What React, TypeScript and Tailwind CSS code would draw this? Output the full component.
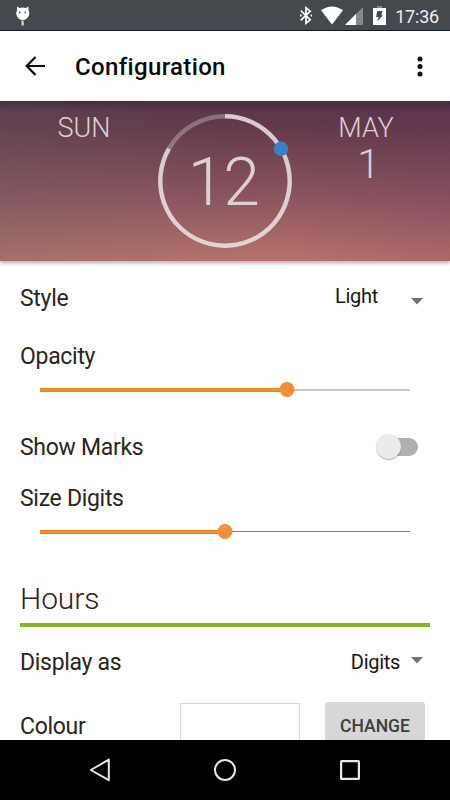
import { useState } from "react";

const StatusBar = () => (
  <div className="flex h-[31px] shrink-0 items-start justify-between border-b border-[#0c1c2e] bg-[#45484c]">
    <svg width="14" height="20" viewBox="0 0 14 20" className="ml-[16px] mt-[6px]">
      <path d="M1 0.5 L3.6 2 Q7 1 10 2 L12.4 0.5 L12.6 4.5 Q13.8 7 13 9.3 Q11.3 14 6.8 14 Q2.2 14 0.5 9.3 Q-0.2 7 1 4.5 Z" fill="#fff" />
      <rect x="5.5" y="14.5" width="2.2" height="5" fill="#d5d6d7" />
      <circle cx="3.8" cy="6.4" r="0.8" fill="#333" />
      <circle cx="9.2" cy="6.4" r="0.8" fill="#333" />
    </svg>
    <div className="flex items-start">
      <svg width="12" height="19" viewBox="0 0 12 19" className="mr-[9px] mt-[6px]" fill="none" stroke="#fff" strokeWidth="1.7">
        <path d="M0.8 4.7 L10.2 13.8 L6 17.3 V1.8 L10.2 5.2 L0.8 14.3" />
        <path d="M0 9.5h1.6M10.6 9.5h1.4" strokeWidth="1.8" />
      </svg>
      <svg width="22" height="19" viewBox="0 0 22 19" className="mr-[2px] mt-[6px]">
        <path d="M0 4.2 Q11 -3.4 22 4.2 L11 18.6 Z" fill="#fff" />
      </svg>
      <svg width="18" height="18" viewBox="0 0 18 18" className="mr-[10px] mt-[7px]">
        <path d="M0 18 L18 0 V18 Z" fill="#85878a" />
        <path d="M0 18 L11 7 V18 Z" fill="#fff" />
      </svg>
      <svg width="13" height="19" viewBox="0 0 13 19" className="mr-[9px] mt-[6px]">
        <path d="M4 0h5v2H4z" fill="#85878a" />
        <path d="M0 2h13v17H0z" fill="#fff" />
        <path d="M4.4 5 H9.6 L8.2 9.2 H10 L4.2 15.6 L5.6 11 H3 Z" fill="#45484c" />
      </svg>
      <span className="mr-[11px] mt-[6px] text-[18px] leading-[21px] tracking-[-0.2px] text-[#ededed]">17:36</span>
    </div>
  </div>
);

const Toolbar = () => (
  <header className="flex h-[70px] shrink-0 items-center bg-white pl-[25px] pr-[27px]">
    <svg width="21" height="20" viewBox="0 0 21 20" fill="none" stroke="#0a0a0a" strokeWidth="2.2">
      <path d="M20 10H2M10.5 1L1.7 10L10.5 19" />
    </svg>
    <h1 className="ml-[29px] mt-[2px] grow text-[24px] font-medium leading-[28px] tracking-[0.35px] text-[#0a0a0a]">
      Configuration
    </h1>
    <svg width="6" height="21" viewBox="0 0 6 21" fill="#111">
      <circle cx="3" cy="3" r="2.5" />
      <circle cx="3" cy="10.5" r="2.5" />
      <circle cx="3" cy="18" r="2.5" />
    </svg>
  </header>
);

const ClockPreview = () => (
  <section className="relative flex h-[160px] shrink-0 border-t border-[#46303f] bg-linear-[180deg,#59344b_0%,#61394a_14%,#8b555d_60%,#b5736c_100%] font-light text-[#ddcfd3] shadow-[0_2px_4px_rgba(0,0,0,0.32)]">
    <div className="absolute inset-0 bg-linear-[90deg,#67676738_0%,#67676700_55%,#67306000_65%,#67306026_100%]" />
    <div className="absolute inset-x-0 top-0 h-[10px] bg-linear-to-b from-[#34243280] to-transparent" />
    <div className="relative w-[156px] pl-[12px] pt-[10px] text-center text-[27px] leading-[32px]">SUN</div>
    <svg width="138" height="138" viewBox="0 0 138 138" className="relative mt-[10px] shrink-0" fill="none">
      <path d="M12.97 36.65 A64.7 64.7 0 0 1 69 4.3" stroke="#fff" strokeOpacity="0.28" strokeWidth="4.4" />
      <path
        d="M69 4.3 A64.7 64.7 0 1 1 12.97 36.65"
        stroke="#f0e6e8"
        strokeOpacity="0.84"
        strokeWidth="4.4"
      />
      <circle cx="125" cy="36.8" r="7.2" fill="#3a80c8" />
      <text x="67.3" y="93" textAnchor="middle" fontSize="66" letterSpacing="-1" className="fill-[#decfd2]">
        12
      </text>
    </svg>
    <div className="relative w-[156px] pr-[12px] pt-[10px] text-center text-[27px] leading-[32px]">
      MAY
      <div className="pl-[5px] text-[41px] leading-[40px]">1</div>
    </div>
  </section>
);

const Caret = () => (
  <svg width="12" height="7" viewBox="0 0 12 7">
    <path d="M0 0h12L6 6.6z" fill="#737373" />
  </svg>
);

const SeekBar = ({ value, track }: { value: number; track: string }) => (
  <div className="relative mx-[20px] flex h-[16px] items-center">
    <div className="h-[4px] border-y border-[#ea8010] bg-[#f48c35]" style={{ width: value }} />
    <div className={`grow ${track}`} />
    <div
      className="absolute size-[15px] -translate-x-1/2 rounded-full bg-[#f28e3c]"
      style={{ left: value }}
    />
  </div>
);

const NavBar = () => (
  <nav className="flex h-[60px] shrink-0 items-center justify-between bg-black px-[89px]">
    <svg width="22" height="24" viewBox="0 0 22 24" fill="none" stroke="#e8e8e8" strokeWidth="2" strokeLinejoin="round">
      <path d="M19.8 1.6V22.2L1.8 12z" />
    </svg>
    <svg width="24" height="24" viewBox="0 0 24 24" fill="none" stroke="#e8e8e8" strokeWidth="2">
      <circle cx="12" cy="12" r="10" />
    </svg>
    <svg width="22" height="22" viewBox="0 0 22 22" fill="none" stroke="#e8e8e8" strokeWidth="2.2">
      <rect x="2.1" y="2.1" width="17.8" height="17.8" rx="0.5" />
    </svg>
  </nav>
);

const App = () => {
  const [showMarks, setShowMarks] = useState(false);

  return (
    <div className="flex h-[800px] w-[450px] flex-col overflow-hidden bg-white font-['Roboto',sans-serif] text-[#2b2420]">
      <StatusBar />
      <Toolbar />
      <ClockPreview />
      <main className="min-h-0 grow overflow-hidden px-[20px] text-[23px] leading-[28px] tracking-[-0.3px]">
        <div className="mt-[24px] flex h-[28px] items-center justify-between">
          <span>Style</span>
          <div className="flex items-center pr-[7px] text-[20px] text-[#1a1512]">
            <span className="mr-[33px] mt-[-6px]">Light</span>
            <div className="mt-[4px] flex">
              <Caret />
            </div>
          </div>
        </div>

        <div className="mt-[30px]">Opacity</div>
        <div className="mt-[10.5px]">
          <SeekBar value={246.5} track="h-[2px] bg-[#c8c8c8]" />
        </div>

        <div className="mt-[36.5px] flex h-[28px] items-center justify-between">
          <span>Show Marks</span>
          <button
            type="button"
            onClick={() => setShowMarks(!showMarks)}
            className={`mr-[12px] mt-[-2px] flex h-[18px] w-[40px] items-center rounded-full bg-[#b0b0b0] ${showMarks ? "justify-end" : "justify-start"}`}
          >
            <span className="-ml-[2.5px] mt-[-1px] size-[25px] rounded-full bg-[#ebebeb] shadow-[0_1px_1px_rgba(0,0,0,0.3)]" />
          </button>
        </div>

        <div className="mt-[23px]">Size Digits</div>
        <div className="mt-[10.5px]">
          <SeekBar value={185} track="h-[1px] bg-[#7c7c7c]" />
        </div>

        <h2 className="mt-[40.5px] h-[47px] border-b-4 border-[#8ab31d] text-[30px] font-light leading-[38px] tracking-[-0.1px]">
          Hours
        </h2>

        <div className="mt-[22px] flex h-[28px] items-center justify-between">
          <span>Display as</span>
          <div className="flex items-center pr-[7px] text-[20px] text-[#1a1512]">
            <span className="mr-[11px] mt-[-2px]">Digits</span>
            <div className="mt-[-5px] flex">
              <Caret />
            </div>
          </div>
        </div>

        <div className="mt-[25px] flex">
          <span className="w-[160px] pt-[11px]">Colour</span>
          <div className="mt-[0.5px] h-[60px] w-[120px] border border-[#d6d6d6] bg-white" />
          <button
            type="button"
            className="ml-[25px] h-[48px] w-[100px] rounded-[3px] bg-[#d6d7d7] text-[17.5px] font-medium tracking-normal text-[#423c38]"
          >
            CHANGE
          </button>
        </div>
      </main>
      <NavBar />
    </div>
  );
};

export default App;
